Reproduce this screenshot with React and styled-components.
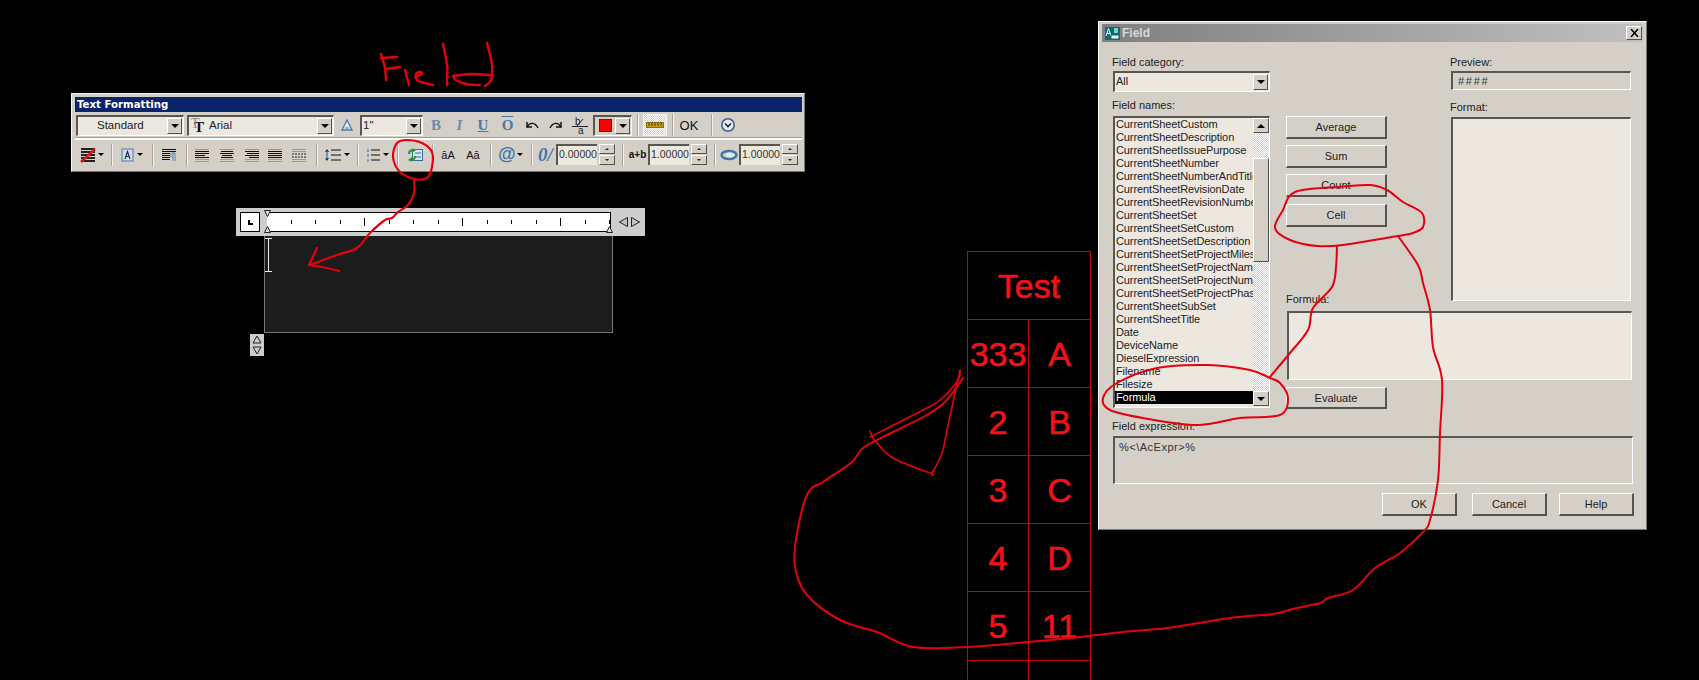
import React from 'react';
import styled, { createGlobalStyle } from 'styled-components';

const FACE = '#d4d0c8';
const FIELD = '#ede8df';
const DARK = '#5a5751';
const RED = '#e5000f';
const UI_FONT = '"Liberation Sans", Arial, sans-serif';

const GlobalStyle = createGlobalStyle`
  html, body {
    margin: 0;
    padding: 0;
    background: #000;
  }
  body {
    font-family: ${UI_FONT};
    font-size: 11px;
    color: #111;
  }
`;

const Desktop = styled.div`
  position: relative;
  width: 1699px;
  height: 680px;
  background: #000;
  overflow: hidden;
`;

/* text formatting toolbar */
const ToolWindow = styled.div`
  position: absolute;
  left: 71px;
  top: 93px;
  width: 734px;
  height: 79px;
  box-sizing: border-box;
  padding: 3px 2px 2px 3px;
  background: ${FACE};
  border-top: 1px solid #f4f4f0;
  border-left: 1px solid #f4f4f0;
  border-right: 1px solid #777;
  border-bottom: 1px solid #777;
`;

const ToolTitle = styled.div`
  height: 15px;
  line-height: 15px;
  padding-left: 2px;
  background: #0a246a;
  color: #fff;
  font-family: "DejaVu Sans", sans-serif;
  font-weight: 700;
  font-size: 10.2px;
`;

const ToolRow = styled.div`
  display: flex;
  align-items: center;
  height: ${(p) => p.$h}px;
  padding-left: ${(p) => p.$pad || 0}px;
  border-bottom: ${(p) => (p.$rule ? '1px solid #fff' : 'none')};
  box-shadow: ${(p) => (p.$rule ? `0 1px 0 #fff, inset 0 -1px 0 #a09c94` : 'none')};
`;

const Slot = styled.div`
  flex: none;
  width: ${(p) => p.$w}px;
  height: 22px;
  display: flex;
  align-items: center;
  justify-content: center;
  gap: 2px;
  color: ${(p) => p.$color || '#111'};
  font-family: ${(p) => (p.$serif ? '"Liberation Serif", serif' : UI_FONT)};
  font-weight: ${(p) => (p.$bold ? 700 : 400)};
  font-style: ${(p) => (p.$italic ? 'italic' : 'normal')};
  font-size: ${(p) => p.$size || 12}px;
  text-decoration: ${(p) => p.$deco || 'none'};
`;

const Sep = styled.div`
  flex: none;
  width: ${(p) => p.$w || 8}px;
  height: 22px;
  display: flex;
  justify-content: center;
  &::before {
    content: '';
    width: 1px;
    height: 100%;
    background: #a8a49c;
    box-shadow: 1px 0 0 #f4f2ec;
  }
`;

const Combo = styled.div`
  flex: none;
  width: ${(p) => p.$w}px;
  height: 21px;
  margin-left: ${(p) => p.$ml || 0}px;
  box-sizing: border-box;
  display: flex;
  align-items: center;
  background: ${FIELD};
  border-top: 2px solid ${DARK};
  border-left: 2px solid ${DARK};
  border-right: 1px solid #fff;
  border-bottom: 1px solid #fff;
  font-size: 11.5px;
  color: #222;
`;

const ComboText = styled.span`
  flex: 1;
  min-width: 0;
  margin-top: -2px;
  padding-left: ${(p) => p.$pad || 0}px;
  white-space: nowrap;
  overflow: hidden;
`;

const Raised = styled.div`
  flex: none;
  box-sizing: border-box;
  background: ${FACE};
  border-top: 1px solid #fff;
  border-left: 1px solid #fff;
  border-right: 1px solid #55524c;
  border-bottom: 1px solid #55524c;
  display: flex;
  align-items: center;
  justify-content: center;
`;

const ComboArrow = styled(Raised)`
  width: 15px;
  height: 16px;
  margin-right: 1px;
`;

const Down = styled.i`
  width: 0;
  height: 0;
  border-left: 4px solid transparent;
  border-right: 4px solid transparent;
  border-top: 4px solid #000;
`;

const Caret = styled(Down)`
  flex: none;
  border-left-width: 3px;
  border-right-width: 3px;
  border-top-width: 3px;
`;

const FontMark = styled.span`
  position: relative;
  flex: none;
  width: 15px;
  height: 16px;
  margin-left: 5px;
  font-family: "Liberation Serif", serif;
  font-weight: 700;
  font-size: 15px;
  line-height: 18px;
  color: #111;
  &::before {
    content: 'T';
    position: absolute;
    left: -3px;
    top: -3px;
    color: #8a8a8a;
    font-weight: 400;
    font-size: 14px;
  }
`;

const ColorCombo = styled(Combo)`
  width: 39px;
  height: 21px;
  margin-left: 1px;
  background: ${FACE};
  justify-content: space-between;
  padding-left: 4px;
`;

const Swatch = styled.div`
  width: 11px;
  height: 11px;
  background: #ff0000;
  border: 1px solid #333;
`;

const RulerButton = styled.div`
  flex: none;
  width: 24px;
  height: 22px;
  box-sizing: border-box;
  margin: 0 1px;
  display: flex;
  align-items: center;
  justify-content: center;
  border: 1px solid #f4f2ec;
  background: repeating-conic-gradient(#fff 0 25%, ${FACE} 0 50%) 0 0 / 2px 2px;
`;

const NumberField = styled.div`
  flex: none;
  width: 41px;
  height: 21px;
  box-sizing: border-box;
  padding-left: 1px;
  line-height: 17px;
  overflow: hidden;
  white-space: nowrap;
  background: ${FIELD};
  border-top: 2px solid ${DARK};
  border-left: 2px solid ${DARK};
  font-size: 10.5px;
  color: #333;
`;

const Spin = styled.div`
  flex: none;
  width: 16px;
  height: 21px;
  margin: 0 2px 0 2px;
  display: flex;
  flex-direction: column;
  gap: 1px;
`;

const SpinPart = styled(Raised)`
  flex: 1;
  &::before {
    content: '';
    width: 0;
    height: 0;
    border-left: 2px solid transparent;
    border-right: 2px solid transparent;
    border-${(p) => (p.$up ? 'bottom' : 'top')}: 2px solid #222;
  }
`;

/* ruler + dark text box */
const EditorWrap = styled.div`
  position: absolute;
  left: 236px;
  top: 208px;
  width: 409px;
`;

const RulerBar = styled.div`
  height: 28px;
  box-sizing: border-box;
  padding: 4px 0 0 4px;
  background: #cdcdcd;
  display: flex;
  align-items: flex-start;
`;

const TabStop = styled.div`
  width: 20px;
  height: 20px;
  box-sizing: border-box;
  border: 1px solid #000;
  background: #fff;
  display: flex;
  align-items: center;
  justify-content: center;
  &::before {
    content: '';
    width: 5px;
    height: 5px;
    margin: 1px 0 0 1px;
    border-left: 2px solid #000;
    border-bottom: 2px solid #000;
    box-sizing: border-box;
  }
`;

const RulerScale = styled.div`
  position: relative;
  width: 344px;
  height: 20px;
  margin-left: 7px;
  box-sizing: border-box;
  background: #fff;
  border: 1px solid #000;
  border-left: none;
  display: flex;
  align-items: center;
`;

const Tick = styled.div`
  flex: none;
  width: 24.5px;
  display: flex;
  justify-content: flex-end;
  &::after {
    content: '';
    width: 1px;
    height: ${(p) => (p.$major ? 8 : 4)}px;
    background: #000;
  }
`;

const Marker = styled.svg`
  position: absolute;
  left: ${(p) => p.$x}px;
  top: ${(p) => p.$y}px;
`;

const RulerArrows = styled.svg`
  margin: 5px 0 0 8px;
`;

const TextBox = styled.div`
  width: 349px;
  height: 97px;
  margin-left: 28px;
  box-sizing: border-box;
  background: #1c1c1c;
  border: 1px solid #777;
  border-top: none;
  padding: 2px 0 0 0;
`;

const SizeHandle = styled.div`
  width: 14px;
  height: 22px;
  margin: 1px 0 0 14px;
  background: #cdcdcd;
  display: flex;
  align-items: center;
  justify-content: center;
`;

/* field dialog */
const Dialog = styled.div`
  position: absolute;
  left: 1098px;
  top: 21px;
  width: 549px;
  height: 509px;
  box-sizing: border-box;
  padding: 2px 3px 3px 3px;
  background: ${FACE};
  border-top: 1px solid #fff;
  border-left: 1px solid #fff;
  border-right: 1px solid #777;
  border-bottom: 1px solid #777;
`;

const DialogTitle = styled.div`
  height: 18px;
  display: flex;
  align-items: center;
  padding: 0 1px 0 3px;
  gap: 2px;
  background: linear-gradient(90deg, #808080, #c0c0c0);
  color: #d8d8d8;
  font-weight: 700;
  font-size: 12px;
`;

const TitleText = styled.span`
  flex: 1;
`;

const CloseBox = styled(Raised)`
  width: 16px;
  height: 14px;
`;

const DialogBody = styled.div`
  padding: 14px 0 0 11px;
`;

const Columns = styled.div`
  display: flex;
  align-items: flex-start;
`;

const LeftColumn = styled.div`
  width: 157px;
`;

const RightSection = styled.div`
  width: 347px;
  margin-left: 16px;
`;

const UpperPart = styled.div`
  display: flex;
  height: 250px;
`;

const ButtonColumn = styled.div`
  width: 101px;
  padding-top: 60px;
  display: flex;
  flex-direction: column;
  gap: 6px;
`;

const PreviewColumn = styled.div`
  width: 180px;
  margin-left: 64px;
`;

const Label = styled.div`
  height: 13px;
  line-height: 13px;
  margin-top: ${(p) => p.$mt || 0}px;
  margin-left: -1px;
  color: #222;
  font-size: 11px;
  white-space: nowrap;
`;

const FormulaLabel = styled(Label)`
  margin-top: auto;
  margin-left: 0;
`;

const Sunken = styled.div`
  box-sizing: border-box;
  width: ${(p) => p.$w}px;
  height: ${(p) => p.$h}px;
  margin-top: ${(p) => p.$mt || 0}px;
  margin-left: ${(p) => p.$ml || 0}px;
  padding: ${(p) => p.$pad || '0'};
  background: ${(p) => (p.$flat ? FACE : FIELD)};
  border-top: 2px solid ${DARK};
  border-left: 2px solid ${DARK};
  border-right: 1px solid #fff;
  border-bottom: 1px solid #fff;
  font-size: 11px;
  line-height: 13px;
  color: #333;
  letter-spacing: ${(p) => p.$track || 0}px;
`;

const DialogCombo = styled(Combo)`
  margin-top: 2px;
  width: 157px;
  font-size: 11px;
`;

const ListBox = styled.div`
  position: relative;
  width: 157px;
  height: 292px;
  margin-top: 4px;
  box-sizing: border-box;
  background: ${FIELD};
  border-top: 2px solid ${DARK};
  border-left: 2px solid ${DARK};
  border-right: 1px solid #fff;
  border-bottom: 1px solid #fff;
  display: flex;
  overflow: hidden;
`;

const ListRows = styled.div`
  width: 138px;
  height: 288px;
  overflow: hidden;
  flex: none;
`;

const ListRow = styled.div`
  height: 13px;
  line-height: 13px;
  padding-left: 1px;
  letter-spacing: -0.1px;
  white-space: nowrap;
  overflow: hidden;
  background: ${(p) => (p.$on ? '#000' : 'transparent')};
  color: ${(p) => (p.$on ? '#fff' : '#222')};
`;

const ScrollTrack = styled.div`
  flex: none;
  width: 16px;
  height: 288px;
  display: flex;
  flex-direction: column;
  background: repeating-conic-gradient(#fff 0 25%, ${FACE} 0 50%) 0 0 / 2px 2px;
`;

const ScrollEnd = styled(Raised)`
  height: 15px;
`;

const Up = styled(Down)`
  border-top: none;
  border-bottom: 4px solid #000;
`;

const ScrollThumb = styled(Raised)`
  height: 104px;
  margin: 25px 0 129px;
`;

const DialogButton = styled(Raised)`
  width: ${(p) => p.$w || 101}px;
  height: ${(p) => p.$h || 23}px;
  margin-top: ${(p) => p.$mt || 0}px;
  border-right-width: 2px;
  border-bottom-width: 2px;
  font-size: 11px;
  color: #222;
`;

const Footer = styled.div`
  width: 521px;
  margin-top: 9px;
  display: flex;
  justify-content: flex-end;
  gap: 15px;
  & > :last-child {
    margin-left: -3px;
  }
`;

/* red cad table behind the dialog */
const CadTable = styled.div`
  position: absolute;
  left: 967px;
  top: 251px;
  display: grid;
  grid-template-columns: 60px 61px;
  grid-template-rows: repeat(5, 67px) 68px 68px;
  gap: 1px;
  padding: 1px;
  background: #c8000c;
`;

const CadCell = styled.div`
  grid-column: ${(p) => (p.$wide ? '1 / span 2' : 'auto')};
  background: #000;
  color: #f2101a;
  font-size: 34px;
  line-height: 69px;
  text-align: center;
  white-space: nowrap;
  -webkit-text-stroke: 0.6px #f2101a;
`;

const Scribbles = styled.svg`
  position: absolute;
  left: 0;
  top: 0;
  pointer-events: none;
`;

const smooth = (pts, closed) => {
  const p = closed ? [...pts, pts[0]] : pts;
  let d = `M${p[0][0]} ${p[0][1]}`;
  for (let i = 0; i < p.length - 1; i++) {
    const a = p[i - 1] || (closed ? p[p.length - 2] : p[i]);
    const b = p[i];
    const c = p[i + 1];
    const e = p[i + 2] || (closed ? p[1] : c);
    const c1x = b[0] + (c[0] - a[0]) / 6;
    const c1y = b[1] + (c[1] - a[1]) / 6;
    const c2x = c[0] - (e[0] - b[0]) / 6;
    const c2y = c[1] - (e[1] - b[1]) / 6;
    d += ` C${c1x.toFixed(1)} ${c1y.toFixed(1)} ${c2x.toFixed(1)} ${c2y.toFixed(1)} ${c[0]} ${c[1]}`;
  }
  return d;
};

const strokes = [
  // the word Field
  { w: 2.4, d: [[381, 54], [385, 68], [386, 80]] },
  { w: 2.4, d: [[381, 58], [397, 57]] },
  { w: 2.4, d: [[385, 69], [400, 67]] },
  { w: 2.4, d: [[405, 70], [409, 85]] },
  { w: 2.4, d: [[415, 77], [422, 74], [420, 72], [416, 74], [417, 80], [425, 83], [433, 85]] },
  { w: 2.4, d: [[443, 44], [447, 65], [447, 85]] },
  { w: 2.4, d: [[487, 43], [492, 65], [491, 80], [485, 86]] },
  { w: 2.4, d: [[453, 76], [470, 74], [490, 75]] },
  { w: 2.4, d: [[453, 76], [456, 80], [466, 84], [480, 85]] },
  // ring round the insert field button, and its arrow
  { w: 2.2, closed: true, d: [[432, 152], [422, 143], [407, 140], [397, 143], [393, 157], [400, 172], [415, 179], [427, 178], [432, 167]] },
  { w: 2.2, d: [[414, 179], [414, 193], [408, 205], [398, 212], [392, 218], [385, 220], [370, 233], [357, 248], [337, 255], [310, 265]] },
  { w: 2.2, d: [[317, 248], [309, 265]] },
  { w: 2.2, d: [[309, 265], [322, 267], [339, 271]] },
  // ring round the cell button and its lines
  { w: 2, closed: true, d: [[1295, 192], [1337, 187], [1370, 185], [1387, 190], [1403, 202], [1422, 213], [1423, 227], [1413, 233], [1398, 236], [1343, 245], [1317, 246], [1290, 240], [1275, 228], [1283, 210]] },
  { w: 2, d: [[1337, 246], [1336, 267], [1332, 287], [1313, 308], [1308, 330], [1290, 353], [1270, 377]] },
  { w: 2, d: [[1398, 236], [1418, 265], [1423, 283], [1430, 310], [1433, 347], [1442, 380], [1440, 433], [1438, 480], [1430, 520], [1423, 532], [1400, 553], [1375, 568], [1353, 590], [1328, 598], [1320, 603], [1293, 609], [1273, 614], [1230, 618], [1167, 628], [1123, 632], [1080, 637], [1028, 642], [967, 647], [913, 647], [877, 632], [840, 620], [807, 595], [795, 567], [797, 533], [808, 493], [823, 482], [852, 462], [863, 448], [893, 432], [925, 416], [945, 402], [963, 378]] },
  // ring round the formula row
  { w: 2, closed: true, d: [[1270, 378], [1250, 370], [1207, 365], [1157, 368], [1117, 383], [1103, 398], [1110, 410], [1143, 418], [1197, 425], [1240, 418], [1280, 415], [1288, 398], [1280, 383]] },
  // arrow head at the table
  { w: 1.6, d: [[960, 370], [958, 380], [940, 400], [923, 410], [870, 437]] },
  { w: 1.6, d: [[870, 431], [873, 438], [877, 443], [893, 458], [930, 473], [932, 473], [942, 453], [947, 430], [960, 370]] },
];

const Svg = ({ w = 16, h = 16, children }) => (
  <svg width={w} height={h} viewBox={`0 0 ${w} ${h}`}>{children}</svg>
);

const AlignIcon = ({ rows }) => (
  <Svg w={18} h={16}>
    {rows.map(([x, w, blue], i) => (
      <rect key={i} x={x} y={2 + i * 2} width={w} height={1} fill={blue ? '#7d9fc4' : '#111'} />
    ))}
  </Svg>
);

const ALIGNS = [
  [[2, 14, 1], [2, 14, 0], [2, 14, 0], [2, 10, 0], [2, 14, 0], [2, 14, 1], [2, 14, 1]],
  [[2, 14, 1], [3, 12, 0], [2, 14, 0], [4, 10, 0], [3, 12, 0], [2, 14, 1], [2, 14, 1]],
  [[2, 14, 1], [2, 14, 0], [4, 12, 0], [2, 14, 0], [6, 10, 0], [2, 14, 1], [2, 14, 1]],
  [[2, 14, 1], [2, 14, 0], [2, 14, 0], [2, 14, 0], [2, 14, 0], [2, 14, 1], [2, 14, 1]],
];

const Stripes = () => (
  <Svg w={16} h={16}>
    {[2, 5, 8, 11, 14].map((y) => (
      <rect key={y} x={1} y={y - 1} width={14} height={2} fill="#222" />
    ))}
    <path d="M1 15L15 2" stroke="#e0141e" strokeWidth="2.4" />
  </Svg>
);

const BoxA = () => (
  <Svg w={15} h={16}>
    <rect x="2" y="2" width="11" height="12" fill="#cfdcec" stroke="#4a7cae" />
    <path d="M5 12L7.5 4.5L10 12M6 9.5H9" fill="none" stroke="#223" strokeWidth="1.1" />
  </Svg>
);

const Paragraph = () => (
  <Svg w={16} h={14}>
    <rect x="1" y="1" width="14" height="1" fill="#111" />
    <rect x="1" y="3" width="14" height="1" fill="#111" />
    <rect x="1" y="5" width="8" height="1" fill="#111" />
    <rect x="1" y="7" width="8" height="1" fill="#111" />
    <rect x="1" y="9" width="8" height="1" fill="#111" />
    <rect x="1" y="11" width="8" height="1" fill="#111" />
    <path d="M12 5V13M14 5V13M14 5H11.5a2 2 0 0 0 0 4H12" fill="none" stroke="#5a88b4" />
  </Svg>
);

const Dotted = () => (
  <Svg w={16} h={14}>
    <rect x="1" y="1" width="14" height="1" fill="#7d9fc4" />
    <rect x="1" y="3" width="14" height="1" fill="#7d9fc4" />
    <path d="M1 6H15M1 9H15" stroke="#222" strokeDasharray="2 1" />
    <rect x="1" y="11" width="14" height="1" fill="#7d9fc4" />
    <rect x="1" y="13" width="14" height="1" fill="#7d9fc4" />
  </Svg>
);

const LineSpacing = () => (
  <Svg w={18} h={16}>
    <path d="M3 2L5 5H1ZM3 14L5 11H1Z" fill="#223" />
    <path d="M3 4V12" stroke="#4a7cae" strokeWidth="1.4" />
    <path d="M7 3H17M7 8H17M7 13H17" stroke="#111" strokeWidth="1" />
  </Svg>
);

const Bullets = () => (
  <Svg w={15} h={16}>
    <rect x="1" y="2" width="2" height="3" fill="#7d9fc4" />
    <rect x="1" y="7" width="2" height="3" fill="#7d9fc4" />
    <rect x="1" y="12" width="2" height="3" fill="#7d9fc4" />
    <path d="M5 3H14M5 8H14M5 13H14" stroke="#111" />
  </Svg>
);

const InsertField = () => (
  <Svg w={16} h={14}>
    <rect x="5.5" y="1.5" width="10" height="11" fill="#d8e6f2" stroke="#356f9e" />
    <path d="M8 5H14M8 9H14" stroke="#356f9e" />
    <path d="M1 6C1 2 4 1 6 1L5 0L9 2L5 5V3.5C4 3.5 3 4 3 6Z" fill="#1a9a2c" />
    <path d="M9 8C9 12 6 13 4 13L5 14L1 12L5 9V10.500C6 10.500 7 10 7 8Z" fill="#1a9a2c" />
  </Svg>
);

const Undo = ({ flip }) => (
  <Svg w={16} h={12}>
    <g transform={flip ? 'matrix(-1 0 0 1 16 0)' : undefined}>
      <path d="M3 3V8H8" fill="none" stroke="#111" strokeWidth="1.5" />
      <path d="M3 8C6 3 11 3 14 9" fill="none" stroke="#111" strokeWidth="1.4" />
    </g>
  </Svg>
);

const StackIcon = () => (
  <Svg w={18} h={17}>
    <text x="4" y="8" fontSize="10" fontFamily="Liberation Sans" fill="#222">b</text>
    <rect x="1" y="9" width="16" height="1" fill="#222" />
    <path d="M12 2L6 9" stroke="#222" />
    <text x="7" y="17" fontSize="10" fontFamily="Liberation Sans" fill="#222">a</text>
  </Svg>
);

const RulerGlyph = () => (
  <Svg w={18} h={8}>
    <rect x="0.500" y="1.500" width="17" height="5" fill="#c8a020" stroke="#8a6c10" />
    <path d="M3 2V5M6 2V5M9 2V5M12 2V5M15 2V5" stroke="#4a3a00" />
  </Svg>
);

const Chevron = () => (
  <Svg w={16} h={16}>
    <circle cx="8" cy="8" r="6.200" fill="#e6eaf0" stroke="#3c5f8a" strokeWidth="1.500" />
    <path d="M5 6.500L8 9.500L11 6.500" fill="none" stroke="#223" strokeWidth="1.600" />
  </Svg>
);

const Oval = () => (
  <Svg w={18} h={12}>
    <ellipse cx="9" cy="6" rx="7.500" ry="4" fill="none" stroke="#3f76ad" strokeWidth="2.400" />
    <ellipse cx="10" cy="6" rx="4" ry="2.500" fill="#dfe6ee" />
  </Svg>
);

const AnnoIcon = () => (
  <Svg w={12} h={12}>
    <path d="M6 1L11 11H1Z" fill="#dfe8f2" stroke="#4a7cae" strokeWidth="1.300" />
    <path d="M4 9H8" stroke="#4a7cae" />
  </Svg>
);

const AppIcon = () => (
  <Svg w={15} h={13}>
    <rect width="15" height="13" fill="#0d6a72" />
    <path d="M1 9L3.500 1.500L6 9M2 6.500H5" fill="none" stroke="#e8f4f4" />
    <rect x="9" y="1" width="4" height="5" fill="#7fd0d0" />
    <rect x="6" y="8" width="8" height="4" fill="#f0f0f0" stroke="#0d6a72" />
  </Svg>
);

const MARKER_PATH = { up: 'M3.500 .5L6.500 6.500H.5Z', down: 'M.5 .5H6.500L3.500 6.500Z' };

const NAMES = [
  'CurrentSheetCustom', 'CurrentSheetDescription', 'CurrentSheetIssuePurpose', 'CurrentSheetNumber',
  'CurrentSheetNumberAndTitle', 'CurrentSheetRevisionDate', 'CurrentSheetRevisionNumber', 'CurrentSheetSet',
  'CurrentSheetSetCustom', 'CurrentSheetSetDescription', 'CurrentSheetSetProjectMilestone',
  'CurrentSheetSetProjectName', 'CurrentSheetSetProjectNumber', 'CurrentSheetSetProjectPhase',
  'CurrentSheetSubSet', 'CurrentSheetTitle', 'Date', 'DeviceName', 'DieselExpression', 'Filename',
  'Filesize', 'Formula', 'Hyperlink',
];

const TABLE_ROWS = [['333', 'A'], ['2', 'B'], ['3', 'C'], ['4', 'D'], ['5', '11'], ['', '']];

const Spinner = () => (
  <Spin>
    <SpinPart $up />
    <SpinPart />
  </Spin>
);

const TextFormatting = () => (
  <ToolWindow>
    <ToolTitle>Text Formatting</ToolTitle>
    <ToolRow $h={26} $pad={1} $rule>
      <Combo $w={108}>
        <ComboText $pad={19}>Standard</ComboText>
        <ComboArrow><Down /></ComboArrow>
      </Combo>
      <Combo $w={147} $ml={3}>
        <FontMark>T</FontMark>
        <ComboText>Arial</ComboText>
        <ComboArrow><Down /></ComboArrow>
      </Combo>
      <Slot $w={26}><AnnoIcon /></Slot>
      <Combo $w={63}>
        <ComboText $pad={1}>1"</ComboText>
        <ComboArrow><Down /></ComboArrow>
      </Combo>
      <Slot $w={1} />
      <Slot $w={24} $serif $bold $size={15} $color="#6d8cab">B</Slot>
      <Slot $w={23} $serif $bold $italic $size={15} $color="#6d8cab">I</Slot>
      <Slot $w={24} $serif $bold $size={15} $color="#4f78a0" $deco="underline">U</Slot>
      <Slot $w={25} $serif $bold $size={15} $color="#4f78a0" $deco="overline">O</Slot>
      <Slot $w={24}><Undo /></Slot>
      <Slot $w={24}><Undo flip /></Slot>
      <Slot $w={24}><StackIcon /></Slot>
      <ColorCombo>
        <Swatch />
        <ComboArrow><Down /></ComboArrow>
      </ColorCombo>
      <Sep $w={10} />
      <RulerButton><RulerGlyph /></RulerButton>
      <Sep $w={8} />
      <Slot $w={26} $size={13}>OK</Slot>
      <Sep $w={18} />
      <Slot $w={16}><Chevron /></Slot>
    </ToolRow>
    <ToolRow $h={31}>
      <Slot $w={2} />
      <Slot $w={30}><Stripes /><Caret /></Slot>
      <Sep />
      <Slot $w={33}><BoxA /><Caret /></Slot>
      <Sep />
      <Slot $w={26}><Paragraph /></Slot>
      <Sep />
      <Slot $w={24}><AlignIcon rows={ALIGNS[0]} /></Slot>
      <Slot $w={26}><AlignIcon rows={ALIGNS[1]} /></Slot>
      <Slot $w={23}><AlignIcon rows={ALIGNS[2]} /></Slot>
      <Slot $w={24}><AlignIcon rows={ALIGNS[3]} /></Slot>
      <Slot $w={23}><Dotted /></Slot>
      <Slot $w={2} />
      <Sep />
      <Slot $w={33}><LineSpacing /><Caret /></Slot>
      <Sep />
      <Slot $w={32}><Bullets /><Caret /></Slot>
      <Sep />
      <Slot $w={27}><InsertField /></Slot>
      <Sep />
      <Slot $w={24} $size={11}>āA</Slot>
      <Slot $w={26} $size={11}>Aā</Slot>
      <Sep />
      <Slot $w={33} $bold $italic $size={18} $color="#3f76ad">@<Caret /></Slot>
      <Sep />
      <Slot $w={21} $serif $bold $italic $size={19} $color="#3f76ad">0/</Slot>
      <NumberField>0.00000</NumberField>
      <Spinner />
      <Sep $w={10} />
      <Slot $w={21} $bold $size={10}>a+b</Slot>
      <NumberField>1.00000</NumberField>
      <Spinner />
      <Sep $w={10} />
      <Slot $w={20}><Oval /></Slot>
      <NumberField>1.00000</NumberField>
      <Spinner />
    </ToolRow>
  </ToolWindow>
);

const TextEditor = () => (
  <EditorWrap>
    <RulerBar>
      <TabStop />
      <RulerScale>
        {Array.from({ length: 14 }, (_, i) => (
          <Tick key={i} $major={i % 4 === 3} />
        ))}
        <Marker $x={-3} $y={-3} width="7" height="7"><path d={MARKER_PATH.down} fill="#ddd" stroke="#222" /></Marker>
        <Marker $x={-3} $y={13} width="7" height="7"><path d={MARKER_PATH.up} fill="#ddd" stroke="#222" /></Marker>
        <Marker $x={339} $y={13} width="7" height="7"><path d={MARKER_PATH.up} fill="#ddd" stroke="#222" /></Marker>
      </RulerScale>
      <RulerArrows width="21" height="10">
        <path d="M8.500 .5V9.500L.5 5ZM12.500 .5V9.500L20.500 5Z" fill="#c4c4c4" stroke="#222" />
      </RulerArrows>
    </RulerBar>
    <TextBox>
      <svg width="8" height="36" style={{ display: 'block' }}>
        <path d="M0 .5H7M3.500 .5V33.500M0 33.500H7" stroke="#eee" fill="none" />
      </svg>
    </TextBox>
    <SizeHandle>
      <svg width="10" height="20" viewBox="0 0 10 20">
        <path d="M5 1L9 8H1ZM1 12H9L5 19Z" fill="none" stroke="#222" />
      </svg>
    </SizeHandle>
  </EditorWrap>
);

const FieldDialog = () => (
  <Dialog>
    <DialogTitle>
      <AppIcon />
      <TitleText>Field</TitleText>
      <CloseBox>
        <svg width="9" height="8" viewBox="0 0 9 8">
          <path d="M1 0L8 8M8 0L1 8" stroke="#000" strokeWidth="1.500" />
        </svg>
      </CloseBox>
    </DialogTitle>
    <DialogBody>
      <Columns>
        <LeftColumn>
          <Label>Field category:</Label>
          <DialogCombo $w={157}>
            <ComboText $pad={1}>All</ComboText>
            <ComboArrow><Down /></ComboArrow>
          </DialogCombo>
          <Label $mt={7}>Field names:</Label>
          <ListBox>
            <ListRows>
              {NAMES.map((name) => (
                <ListRow key={name} $on={name === 'Formula'}>{name}</ListRow>
              ))}
            </ListRows>
            <ScrollTrack>
              <ScrollEnd><Up /></ScrollEnd>
              <ScrollThumb />
              <ScrollEnd><Down /></ScrollEnd>
            </ScrollTrack>
          </ListBox>
        </LeftColumn>
        <RightSection>
          <UpperPart>
            <ButtonColumn>
              <DialogButton>Average</DialogButton>
              <DialogButton>Sum</DialogButton>
              <DialogButton>Count</DialogButton>
              <DialogButton $mt={1}>Cell</DialogButton>
              <FormulaLabel>Formula:</FormulaLabel>
            </ButtonColumn>
            <PreviewColumn>
              <Label>Preview:</Label>
              <Sunken $flat $w={180} $h={19} $mt={2} $pad="2px 0 0 5px" $track={1.7}>####</Sunken>
              <Label $mt={11}>Format:</Label>
              <Sunken $w={180} $h={184} $mt={3} />
            </PreviewColumn>
          </UpperPart>
          <Sunken $w={345} $h={69} $mt={5} $ml={1} />
          <DialogButton $h={22} $mt={7}>Evaluate</DialogButton>
        </RightSection>
      </Columns>
      <Label $mt={11}>Field expression:</Label>
      <Sunken $flat $w={520} $h={48} $mt={3} $pad="3px 0 0 4px" $track={0.5}>%&lt;\AcExpr&gt;%</Sunken>
      <Footer>
        <DialogButton $w={75}>OK</DialogButton>
        <DialogButton $w={75}>Cancel</DialogButton>
        <DialogButton $w={75}>Help</DialogButton>
      </Footer>
    </DialogBody>
  </Dialog>
);

const App = () => (
  <Desktop>
    <GlobalStyle />
    <TextFormatting />
    <TextEditor />
    <CadTable>
      <CadCell $wide>Test</CadCell>
      {TABLE_ROWS.flat().map((value, i) => (
        <CadCell key={i}>{value}</CadCell>
      ))}
    </CadTable>
    <FieldDialog />
    <Scribbles width="1699" height="680">
      {strokes.map((s, i) => (
        <path key={i} d={smooth(s.d, s.closed)} fill="none" stroke={RED} strokeWidth={s.w} strokeLinecap="round" strokeLinejoin="round" />
      ))}
    </Scribbles>
  </Desktop>
);

export default App;
